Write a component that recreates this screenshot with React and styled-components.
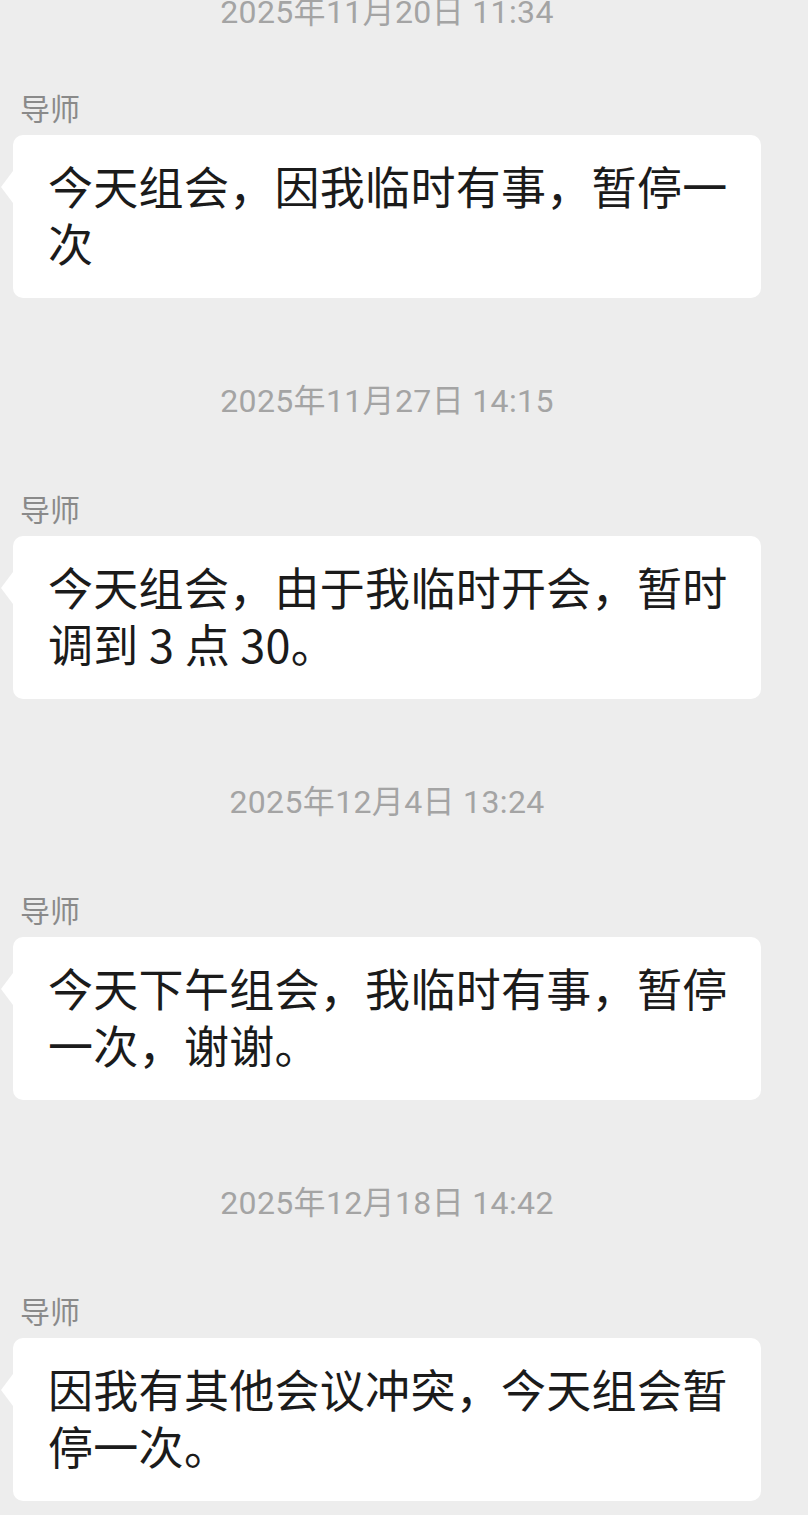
import React from 'react';
import styled, { createGlobalStyle } from 'styled-components';

const GlobalStyle = createGlobalStyle`
	html, body {
		margin: 0;
		padding: 0;
		background-color: #ededed;
	}

	body {
		font-family: Roboto, "Noto Sans CJK SC", sans-serif;
		-webkit-font-smoothing: antialiased;
	}
`

const Page = styled.div`
	width: 808px;
	height: 1515px;
	overflow: hidden;
	background-color: #ededed;
	padding-left: 13px;
	box-sizing: border-box;
`

const Column = styled.div`
	width: 748px;
	display: flex;
	flex-direction: column;
`

const Block = styled.div`
	display: flex;
	flex-direction: column;
	align-items: flex-start;
	margin-top: ${props => props.$first ? '-10px' : '81px'};
`

const Time = styled.div`
	align-self: stretch;
	text-align: center;
	font-family: Roboto, "Noto Sans CJK SC", sans-serif;
	font-size: 32px;
	letter-spacing: 0.35px;
	line-height: 44px;
	height: 44px;
	color: #a4a4a4;
`

const Sender = styled.div`
	margin-top: ${props => props.$first ? '55px' : '67px'};
	padding-left: 7px;
	font-family: "Noto Sans CJK SC", sans-serif;
	font-size: 30px;
	line-height: 36px;
	height: 36px;
	color: #8a8a8a;
`

const Bubble = styled.div`
	position: relative;
	margin-top: 10px;
	max-width: 748px;
	box-sizing: border-box;
	padding: 22px 26px 27px 35px;
	background-color: #fff;
	border-radius: 10px;
	font-family: "Noto Sans CJK SC", sans-serif;
	font-size: 45px;
	letter-spacing: 0.3px;
	line-height: 57px;
	color: #1b1b1b;

	&::before {
		content: '';
		position: absolute;
		left: -12px;
		top: 36px;
		border-top: 16px solid transparent;
		border-bottom: 16px solid transparent;
		border-right: 12px solid #fff;
	}
`

const messages = [
	{ id: 1, time: '2025年11月20日 11:34', text: '今天组会，因我临时有事，暂停一次' },
	{ id: 2, time: '2025年11月27日 14:15', text: '今天组会，由于我临时开会，暂时调到 3 点 30。' },
	{ id: 3, time: '2025年12月4日 13:24', text: '今天下午组会，我临时有事，暂停一次，谢谢。' },
	{ id: 4, time: '2025年12月18日 14:42', text: '因我有其他会议冲突，今天组会暂停一次。' },
]

const App = () => {
	return (
		<Page>
			<GlobalStyle />
			<Column>
				{messages.map((message, index) => (
					<Block key={message.id} $first={index === 0}>
						<Time>{message.time}</Time>
						<Sender $first={index === 0}>导师</Sender>
						<Bubble>{message.text}</Bubble>
					</Block>
				))}
			</Column>
		</Page>
	);
}

export default App;
